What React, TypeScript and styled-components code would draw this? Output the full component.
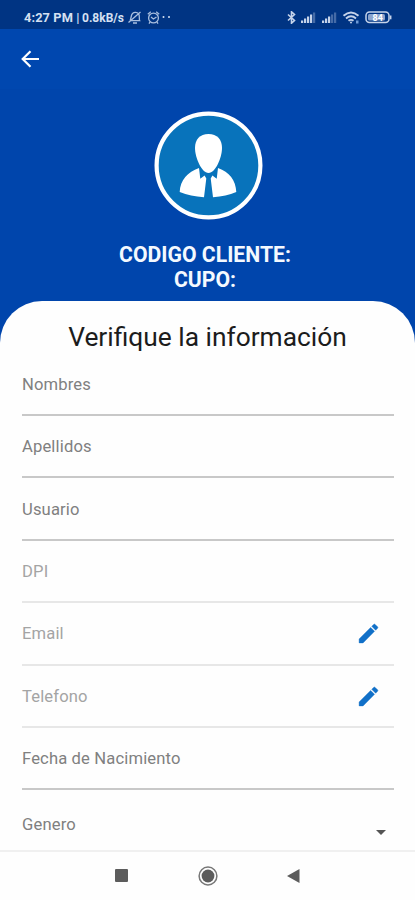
import React from 'react';
import styled, { createGlobalStyle } from 'styled-components';

const GlobalStyle = createGlobalStyle`
  * { box-sizing: border-box; }
  body { margin: 0; background: #fefefe; font-family: Roboto, 'Liberation Sans', sans-serif; }
`;

const Screen = styled.div`
  width: 415px;
  height: 900px;
  overflow: hidden;
  display: flex;
  flex-direction: column;
  background: #0045ac;
`;

const StatusBar = styled.header`
  flex: none;
  height: 29px;
  padding: 6px 23px 0 24px;
  display: flex;
  justify-content: space-between;
  background: #003483;
  color: #d5e0f2;
`;

const StatusGroup = styled.div`
  display: flex;
  align-items: center;
  height: 23px;
`;

const Clock = styled.span`
  font-size: 12.8px;
  font-weight: 700;
  letter-spacing: 0.1px;
  white-space: pre;
  width: 58px;
`;

const NetSpeed = styled.span`
  font-size: 12px;
  font-weight: 700;
  width: 44px;
  white-space: nowrap;
`;

const AppBar = styled.nav`
  flex: none;
  height: 60px;
  padding-left: 18px;
  display: flex;
  align-items: center;
  background: #0047af;
`;

const IconButton = styled.button`
  border: 0;
  padding: 0;
  background: none;
  display: flex;
`;

const Profile = styled.section`
  flex: none;
  height: 212px;
  padding: 22px 5px 0 0;
  display: flex;
  flex-direction: column;
  align-items: center;
`;

const Avatar = styled.svg`
  display: block;
  width: 110px;
  height: 110px;
  margin-left: 5px;
`;

const ProfileText = styled.p`
  margin: 22px 0 0;
  color: #f4f9ff;
  font-size: 21.2px;
  font-weight: 700;
  line-height: 24.5px;
  text-align: center;
`;

const Sheet = styled.main`
  flex: 1;
  min-height: 0;
  overflow: hidden;
  padding: 19px 22px 0 22px;
  border-radius: 42px 42px 0 0;
  background: #fefefe;
`;

const Title = styled.h1`
  margin: 0;
  height: 33.6px;
  color: #1c1c1c;
  font-size: 26.35px;
  font-weight: 400;
  line-height: 35px;
  text-align: center;
  white-space: nowrap;
`;

const Field = styled.div<{ $muted?: boolean; $last?: boolean }>`
  height: ${p => (p.$last ? 63 : 62.4)}px;
  margin-right: -1px;
  padding-right: 13px;
  padding-top: ${p => (p.$last ? 5 : 1)}px;
  display: flex;
  align-items: center;
  justify-content: space-between;
  border-bottom: ${p => (p.$last ? '0' : '2px')} solid ${p => (p.$muted ? '#e7e7e7' : '#c8c8c8')};
  color: ${p => (p.$muted ? '#a4a4a4' : '#808080')};
  font-size: 16.6px;
  letter-spacing: 0.14px;
`;

const Caret = styled.svg`
  width: 10px;
  height: 5px;
  margin: 16px -5px 0 0;
`;

const NavBar = styled.footer`
  flex: none;
  height: 50px;
  border-top: 2px solid #f0f0f0;
  background: #fefefe;
  display: grid;
  grid-template-columns: 86px 86px 86px;
  justify-content: center;
  justify-items: center;
  align-items: center;
  padding-bottom: 1px;
`;

const Pencil = () => (
  <svg width="25" height="25" viewBox="0 0 24 24" fill="#1170c8" stroke="#1170c8" strokeWidth="0.4" strokeLinejoin="round">
    <path d="M3 17.25V21h3.75L17.8 9.94l-3.75-3.75L3 17.25zM20.7 7.04a1 1 0 0 0 0-1.41l-2.34-2.34a1 1 0 0 0-1.41 0l-1.83 1.83 3.75 3.75 1.83-1.83z" />
  </svg>
);

const Signal = ({ active }: { active: number }) => (
  <svg width="21" height="13" viewBox="0 0 21 13" fill="#c5d3ea">
    {[0, 1, 2, 3, 4].map(i => (
      <rect key={i} x={1 + i * 3} y={9.5 - i * 2} width="2.2" height={2.5 + i * 2} opacity={i < active ? 1 : 0.35} />
    ))}
  </svg>
);

const StatusIcons = () => (
  <StatusGroup>
    <svg width="14" height="13" viewBox="0 0 14 13" fill="none" stroke="#c5d3ea" strokeWidth="1.6">
      <path d="M2 3.5l6.5 6-3 2.7V.8l3 2.7-6.5 6" />
    </svg>
    <Signal active={4} />
    <Signal active={3} />
    <svg width="23" height="14" viewBox="0 0 23 14" fill="none" stroke="#c5d3ea" strokeWidth="1.9">
      <path d="M1.5 4.8Q9 -1.8 16.5 4.8M4 7.4Q9 3.2 14 7.4M6.5 9.8Q9 8 11.5 9.8" />
      <circle cx="9" cy="11.5" r="1" fill="#c5d3ea" stroke="none" />
      <rect x="14" y="9.5" width="2.5" height="3" fill="#6e9ad6" stroke="none" />
    </svg>
    <svg width="27" height="13" viewBox="0 0 27 13">
      <rect x="1" y="1" width="23" height="10.5" rx="3.5" fill="none" stroke="#c5d3ea" strokeWidth="1.5" />
      <rect x="3" y="3" width="17" height="6.5" rx="1.5" fill="#8ba4cd" />
      <path d="M25.7 4.5v3.8" stroke="#c5d3ea" strokeWidth="1.5" />
      <text x="12.7" y="9.5" textAnchor="middle" fontFamily="Roboto, sans-serif" fontSize="9" fontWeight="700" fill="#fff">84</text>
    </svg>
  </StatusGroup>
);

const fields: { label: string; muted?: boolean; editable?: boolean }[] = [
  { label: 'Nombres' },
  { label: 'Apellidos' },
  { label: 'Usuario' },
  { label: 'DPI', muted: true },
  { label: 'Email', muted: true, editable: true },
  { label: 'Telefono', muted: true, editable: true },
  { label: 'Fecha de Nacimiento' },
];

export default function App() {
  return (
    <Screen>
      <GlobalStyle />
      <StatusBar>
        <StatusGroup>
          <Clock>4:27 PM |</Clock>
          <NetSpeed>0.8kB/s</NetSpeed>
          <svg width="47" height="15" viewBox="0 0 47 15" fill="none" stroke="#a9bfdf" strokeWidth="1.3">
            <path d="M4 10.5c1.4-1.5.5-5 2.500-7 1.800-1.700 4.600-1.400 6 .2 1.600 1.900.3 5 1.200 7H4M7 13h4M2.500 12.500L14.500 2" />
            <circle cx="27.5" cy="8" r="4.9" />
            <path d="M21.8 4.3l3-2.5M30.2 1.8l3 2.5M25 7l2.4 2L30.5 7M24 12.2l-1 1.5M31 12.2l1 1.5" />
            <circle cx="37.5" cy="7" r="1" fill="#d5e0f2" stroke="none" />
            <circle cx="43" cy="7" r="1" fill="#d5e0f2" stroke="none" />
          </svg>
        </StatusGroup>
        <StatusIcons />
      </StatusBar>
      <AppBar>
        <IconButton aria-label="Volver">
          <svg width="24" height="24" viewBox="0 0 24 24" fill="none" stroke="#fff" strokeWidth="2.2">
            <path d="M21 12H5M12.5 4.2L4.7 12l7.8 7.8" />
          </svg>
        </IconButton>
      </AppBar>
      <Profile>
        <Avatar viewBox="0 0 110 110">
          <circle cx="55.5" cy="54.5" r="51.9" fill="#0873bb" stroke="#fff" strokeWidth="4.2" />
          <path
            fill="#fff"
            d="M55.5 23c8.7 0 13.500 5.500 13.500 14 0 9.500-6.500 25-13.500 25S42 46.500 42 37c0-8.500 4.800-14 13.500-14z"
          />
          <path
            fill="#fff"
            d="M46 57l1.3 10.8 4.3-3.3 1.7 3-2.3 18.7c-9-.7-17-2.2-24.3-5.2.5-12 8-20 19.3-24zM65 57l-1.3 10.8-4.3-3.3-1.7 3L60 86.2c9-.7 16.3-2.2 23.3-5.2-.5-12-7-20-18.3-24z"
          />
        </Avatar>
        <ProfileText>CODIGO CLIENTE:<br />CUPO:</ProfileText>
      </Profile>
      <Sheet>
        <Title>Verifique la información</Title>
        {fields.map(f => (
          <Field key={f.label} $muted={f.muted}>
            {f.label}
            {f.editable && <IconButton aria-label={`Editar ${f.label}`}><Pencil /></IconButton>}
          </Field>
        ))}
        <Field $last>
          Genero
          <Caret viewBox="0 0 10 5"><path d="M0 0h10L5 5z" fill="#555" /></Caret>
        </Field>
      </Sheet>
      <NavBar>
        <svg width="13" height="13"><rect width="13" height="13" rx="1" fill="#5c5c5c" /></svg>
        <svg width="20" height="20" viewBox="0 0 20 20">
          <circle cx="10" cy="10" r="8.9" fill="none" stroke="#777" strokeWidth="1.5" />
          <circle cx="10" cy="10" r="6.4" fill="#5c5c5c" />
        </svg>
        <svg width="13" height="14" viewBox="0 0 13 14"><path d="M12.5 0v14L0 7z" fill="#5c5c5c" /></svg>
      </NavBar>
    </Screen>
  );
}
